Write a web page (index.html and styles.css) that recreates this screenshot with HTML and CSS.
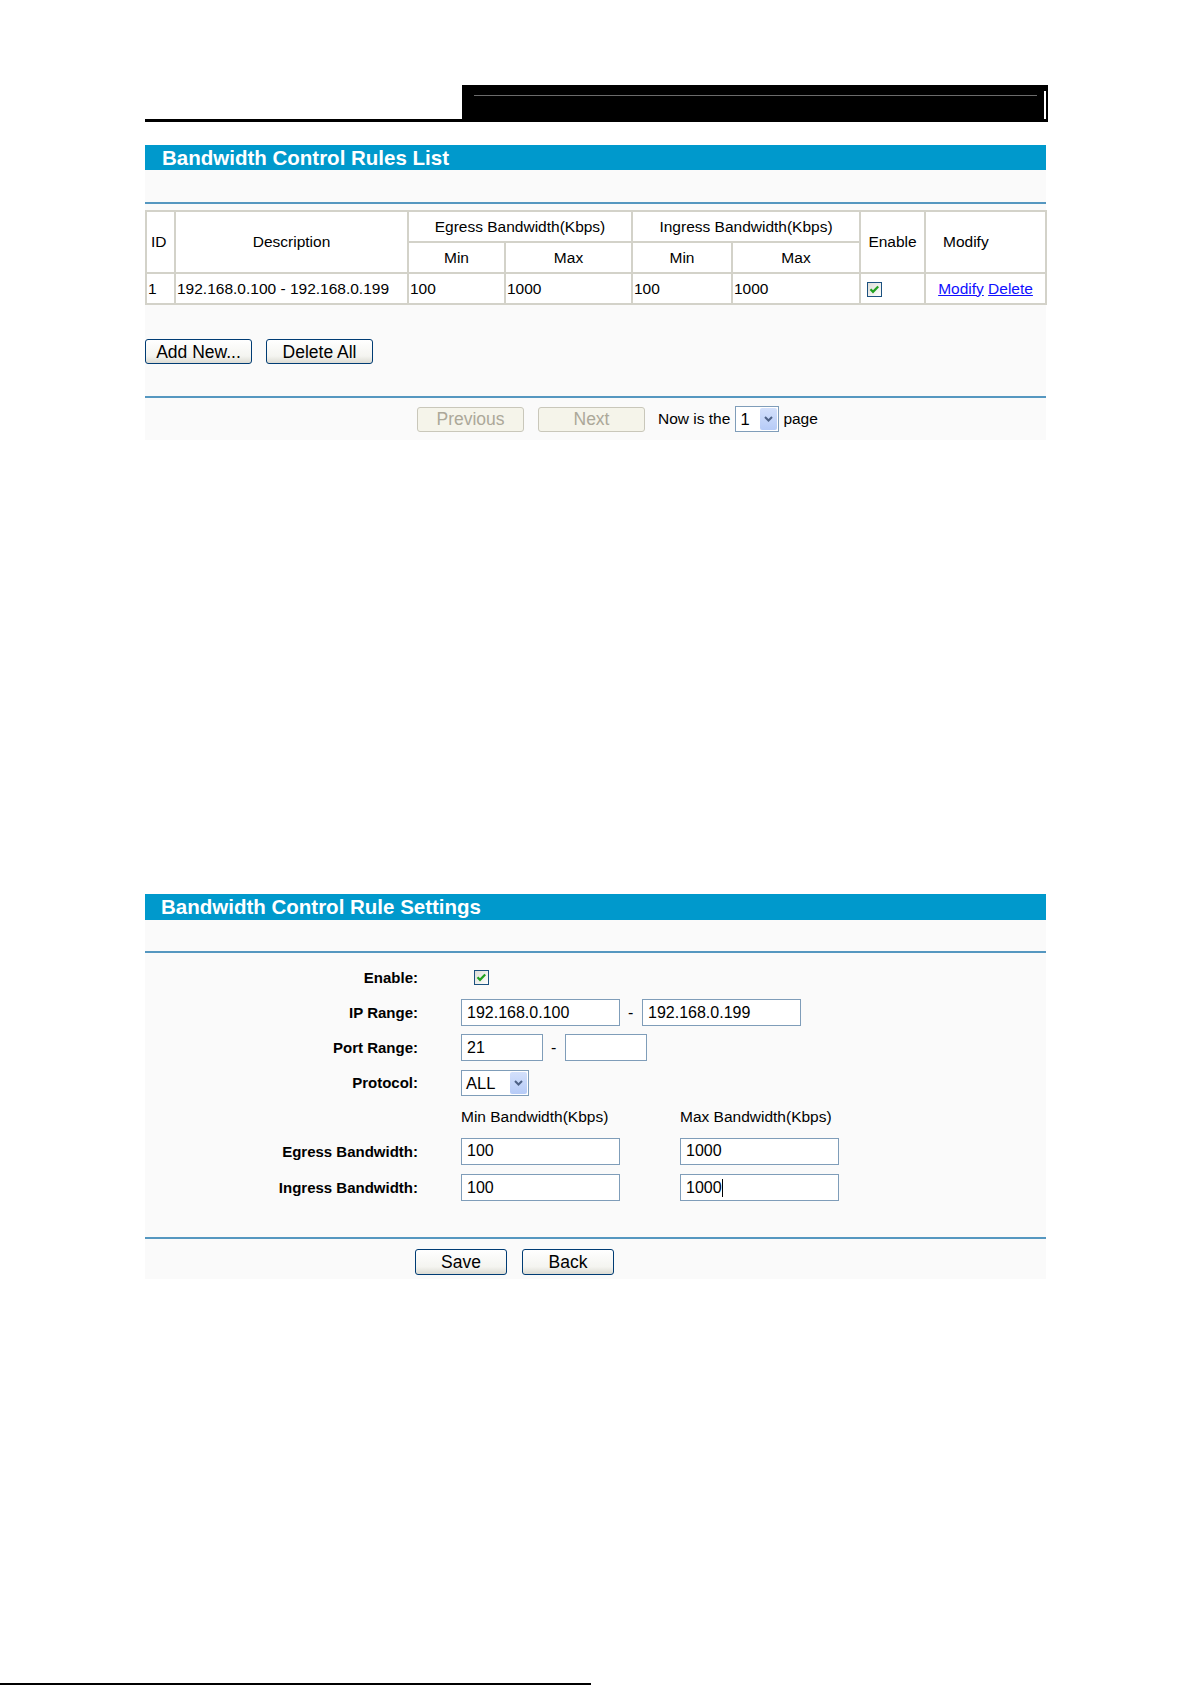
FILE: index.html
```html
<!DOCTYPE html>
<html lang="en">
<head>
    <meta charset="UTF-8">
    <title>Bandwidth Control</title>
    <link rel="stylesheet" href="styles.css">
</head>
<body>
    <div class="sheet">
        <!-- top banner -->
        <div class="head">
            <div class="head-left"></div>
            <div class="head-box">
                <div class="head-rule"></div>
                <div class="head-edge"></div>
            </div>
        </div>

        <!-- rules list -->
        <div class="section section-list">
            <div class="title-bar narrow">Bandwidth Control Rules List</div>
            <div class="panel panel-list">
                <div class="blue-line"></div>
                <table class="rules">
                    <colgroup>
                        <col style="width: 29px">
                        <col style="width: 233px">
                        <col style="width: 97px">
                        <col style="width: 127px">
                        <col style="width: 100px">
                        <col style="width: 128px">
                        <col style="width: 65px">
                        <col style="width: 121px">
                    </colgroup>
                    <tr>
                        <th rowspan="2" class="left">ID</th>
                        <th rowspan="2">Description</th>
                        <th colspan="2">Egress Bandwidth(Kbps)</th>
                        <th colspan="2">Ingress Bandwidth(Kbps)</th>
                        <th rowspan="2">Enable</th>
                        <th rowspan="2" class="modify-head">Modify</th>
                    </tr>
                    <tr>
                        <th>Min</th>
                        <th>Max</th>
                        <th>Min</th>
                        <th>Max</th>
                    </tr>
                    <tr>
                        <td>1</td>
                        <td>192.168.0.100 - 192.168.0.199</td>
                        <td>100</td>
                        <td>1000</td>
                        <td>100</td>
                        <td>1000</td>
                        <td class="enable-cell">
                            <span class="check">
                                <svg width="15" height="15" viewBox="0 0 15 15">
                                    <defs>
                                        <linearGradient id="cbg1" x1="0" y1="0" x2="1" y2="1">
                                            <stop offset="0" stop-color="#dcdcd6"/>
                                            <stop offset="1" stop-color="#ffffff"/>
                                        </linearGradient>
                                    </defs>
                                    <rect x="0.5" y="0.5" width="14" height="14" fill="url(#cbg1)" stroke="#1c5180"/>
                                    <path d="M3.5 7.2 L6 9.8 L11.2 4.4" fill="none" stroke="#21a121" stroke-width="2.2"/>
                                </svg>
                            </span>
                        </td>
                        <td class="center"><a href="#">Modify</a> <a href="#">Delete</a></td>
                    </tr>
                </table>

                <div class="btn-row list-actions">
                    <button class="btn btn-wide">Add New...</button>
                    <button class="btn btn-wide">Delete All</button>
                </div>

                <div class="blue-line line-pager"></div>

                <div class="pager">
                    <button class="btn btn-wide" disabled>Previous</button>
                    <button class="btn btn-wide" disabled>Next</button>
                    <span class="pager-text">Now is the</span>
                    <span class="select select-page">
                        <span class="select-value">1</span>
                        <span class="select-arrow">
                            <svg width="9" height="6" viewBox="0 0 9 6"><path d="M1 1 L4.5 4.5 L8 1" fill="none" stroke="#4d6185" stroke-width="2"/></svg>
                        </span>
                    </span>
                    <span class="pager-text">page</span>
                </div>
            </div>
        </div>

        <!-- rule settings -->
        <div class="section section-form">
            <div class="title-bar">Bandwidth Control Rule Settings</div>
            <div class="panel panel-form">
                <div class="blue-line"></div>

                <div class="form">
                    <div class="form-row">
                        <label class="form-label">Enable:</label>
                        <div class="form-field">
                            <span class="check check-form">
                                <svg width="15" height="15" viewBox="0 0 15 15">
                                    <defs>
                                        <linearGradient id="cbg2" x1="0" y1="0" x2="1" y2="1">
                                            <stop offset="0" stop-color="#dcdcd6"/>
                                            <stop offset="1" stop-color="#ffffff"/>
                                        </linearGradient>
                                    </defs>
                                    <rect x="0.5" y="0.5" width="14" height="14" fill="url(#cbg2)" stroke="#1c5180"/>
                                    <path d="M3.5 7.2 L6 9.8 L11.2 4.4" fill="none" stroke="#21a121" stroke-width="2.2"/>
                                </svg>
                            </span>
                        </div>
                    </div>
                    <div class="form-row">
                        <label class="form-label">IP Range:</label>
                        <div class="form-field dash-gap">
                            <input class="text-box box-ip" type="text" value="192.168.0.100">
                            <span class="dash">-</span>
                            <input class="text-box box-ip" type="text" value="192.168.0.199">
                        </div>
                    </div>
                    <div class="form-row">
                        <label class="form-label">Port Range:</label>
                        <div class="form-field dash-gap">
                            <input class="text-box box-port" type="text" value="21">
                            <span class="dash">-</span>
                            <input class="text-box box-port" type="text" value="">
                        </div>
                    </div>
                    <div class="form-row">
                        <label class="form-label">Protocol:</label>
                        <div class="form-field">
                            <span class="select select-proto">
                                <span class="select-value">ALL</span>
                                <span class="select-arrow">
                                    <svg width="9" height="6" viewBox="0 0 9 6"><path d="M1 1 L4.5 4.5 L8 1" fill="none" stroke="#4d6185" stroke-width="2"/></svg>
                                </span>
                            </span>
                        </div>
                    </div>
                    <div class="form-row row-caption">
                        <span></span>
                        <div class="form-field pair">
                            <span class="caption">Min Bandwidth(Kbps)</span>
                            <span class="caption">Max Bandwidth(Kbps)</span>
                        </div>
                    </div>
                    <div class="form-row row-egress">
                        <label class="form-label">Egress Bandwidth:</label>
                        <div class="form-field pair">
                            <input class="text-box box-ip" type="text" value="100">
                            <input class="text-box box-ip" type="text" value="1000">
                        </div>
                    </div>
                    <div class="form-row row-last">
                        <label class="form-label">Ingress Bandwidth:</label>
                        <div class="form-field pair">
                            <input class="text-box box-ip" type="text" value="100">
                            <span class="text-box box-ip fake-focus">1000<span class="caret"></span></span>
                        </div>
                    </div>
                </div>

                <div class="blue-line"></div>

                <div class="btn-row form-actions">
                    <button class="btn btn-save">Save</button>
                    <button class="btn btn-save">Back</button>
                </div>
            </div>
        </div>
    </div>

    <div class="foot">
        <div class="foot-line"></div>
    </div>
</body>
</html>
```

FILE: styles.css
```css
html, body {
    margin: 0;
    padding: 0;
    background-color: #fff;
}

body {
    font-family: "Liberation Sans", Arial, sans-serif;
    color: #000;
    height: 1685px;
    display: flex;
    flex-direction: column;
}

.sheet {
    margin-left: 145px;
    width: 903px;
}

/* banner at the top */
.head {
    margin-top: 85px;
    height: 37px;
    display: flex;
}

.head-left {
    width: 317px;
    border-bottom: 3px solid #000;
}

.head-box {
    flex: 1;
    background-color: #000;
    display: flex;
    padding: 6px 2px 3px 12px;
}

.head-rule {
    flex: 1;
    height: 0;
    margin-top: 4px;
    margin-right: 7px;
    border-top: 1px solid #6b6b6b;
}

.head-edge {
    width: 2px;
    background-color: #fff;
}

/* sections */
.section {
    width: 901px;
}

.section-list {
    margin-top: 23px;
}

.section-form {
    margin-top: 454px;
}

.title-bar {
    height: 25px;
    line-height: 26px;
    background-color: #0099cc;
    color: #fff;
    font-weight: bold;
    font-size: 20.5px;
    padding-left: 17px;
}

.section-form .title-bar {
    height: 26px;
    padding-left: 16px;
}

.panel {
    background-color: #fafafa;
    padding-top: 32px;
}

.panel-list {
    padding-bottom: 8px;
}

.panel-form {
    padding-top: 31px;
    padding-bottom: 4px;
}

.blue-line {
    height: 2px;
    background-color: #5597c0;
}

/* rules table */
.rules {
    width: 901px;
    table-layout: fixed;
    border-collapse: collapse;
    background-color: #fff;
    margin-top: 6px;
    font-size: 15.5px;
}

.rules th,
.rules td {
    border: 2px solid #d3d2c9;
    padding: 0 1px;
    height: 29px;
    white-space: nowrap;
    overflow: hidden;
}

.rules th {
    font-weight: normal;
    text-align: center;
}

.rules th.left {
    text-align: left;
    padding-left: 4px;
}

.rules th.modify-head {
    text-align: left;
    padding-left: 17px;
}

.rules td.center {
    text-align: center;
}

.rules td.enable-cell {
    padding-left: 6px;
}

.rules a {
    color: #1010ff;
    text-decoration: underline;
}

.check {
    display: inline-block;
    width: 15px;
    height: 15px;
    vertical-align: middle;
}

.check svg {
    display: block;
}

/* buttons */
.btn-row {
    display: flex;
}

.list-actions {
    margin-top: 34px;
    gap: 14px;
}

.btn {
    box-sizing: border-box;
    height: 25px;
    border: 1px solid #003c74;
    border-radius: 3px;
    background: linear-gradient(#ffffff, #f4f4f0 70%, #dcdbd3);
    font-family: "Liberation Sans", Arial, sans-serif;
    font-size: 17.5px;
    color: #000;
    padding: 0;
    line-height: 22px;
}

.btn-wide {
    width: 107px;
}

.btn:disabled {
    border-color: #c9c7ba;
    background: #f5f4ea;
    color: #aca899;
}

.line-pager {
    margin-top: 32px;
}

.pager {
    display: flex;
    align-items: center;
    margin-top: 8px;
    padding-left: 272px;
    height: 26px;
    font-size: 15.5px;
}

.pager .btn + .btn {
    margin-left: 14px;
}

.pager-text {
    margin-left: 13px;
}

.pager .select + .pager-text {
    margin-left: 4px;
}

.select {
    box-sizing: border-box;
    display: inline-flex;
    align-items: stretch;
    height: 26px;
    border: 1px solid #7f9db9;
    background-color: #fff;
    font-size: 16.5px;
}

.select-page {
    width: 44px;
    margin-left: 5px;
}

.select-proto {
    width: 68px;
}

.select-value {
    flex: 1;
    padding-left: 4px;
    line-height: 24px;
}

.select-arrow {
    width: 17px;
    margin: 1px;
    border-radius: 2px;
    background: linear-gradient(#d3e0fb, #b6cbf7);
    display: flex;
    align-items: center;
    justify-content: center;
}

/* settings form */
.form {
    margin-top: 7px;
    margin-bottom: 31px;
}

.form-row {
    display: grid;
    grid-template-columns: 273px 1fr;
    column-gap: 43px;
    align-items: center;
    height: 35px;
}

.row-caption {
    height: 33px;
}

.row-egress {
    height: 36px;
}

.row-last {
    height: 37px;
}

.form-label {
    text-align: right;
    font-weight: bold;
    font-size: 15px;
}

.form-field {
    display: flex;
    align-items: center;
}

.dash-gap {
    gap: 8px;
}

.dash {
    font-size: 16px;
    width: 6px;
}

.pair {
    gap: 60px;
}

.check-form {
    margin-left: 13px;
}

.text-box {
    box-sizing: border-box;
    height: 27px;
    border: 1px solid #7f9db9;
    background-color: #fff;
    font-family: "Liberation Sans", Arial, sans-serif;
    font-size: 16px;
    color: #000;
    padding: 0 0 0 5px;
    margin: 0;
    outline: none;
}

.box-ip {
    width: 159px;
}

.box-port {
    width: 82px;
}

.fake-focus {
    display: flex;
    align-items: center;
}

.caret {
    display: inline-block;
    width: 1px;
    height: 18px;
    background-color: #000;
}

.caption {
    width: 159px;
    font-size: 15.5px;
    white-space: nowrap;
}

.form-actions {
    margin-top: 10px;
    padding-left: 270px;
    gap: 15px;
}

.btn-save {
    width: 92px;
    height: 26px;
}

/* bottom rule */
.foot {
    margin-top: auto;
    height: 2px;
}

.foot-line {
    width: 591px;
    height: 2px;
    background-color: #000;
}
```
